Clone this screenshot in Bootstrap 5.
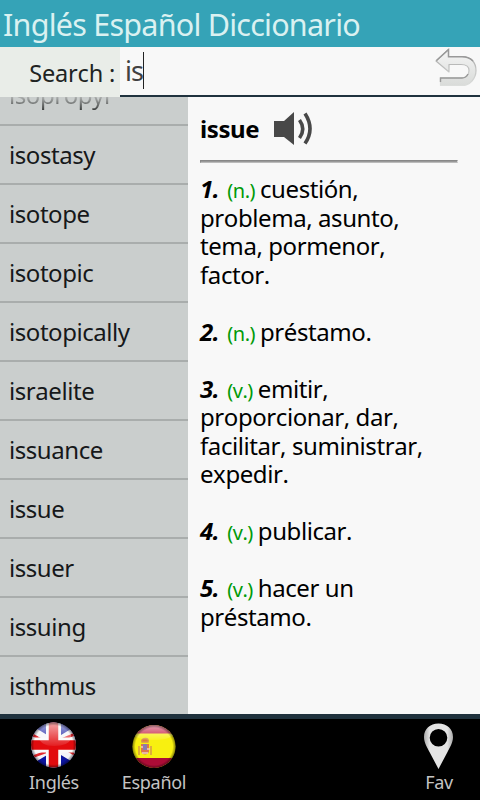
<!DOCTYPE html>
<html lang="es">
<head>
<meta charset="utf-8">
<meta name="viewport" content="width=device-width, initial-scale=1">
<title>Inglés Español Diccionario</title>
<link href="https://cdn.jsdelivr.net/npm/bootstrap@5.3.0/dist/css/bootstrap.min.css" rel="stylesheet">
<style>
body{font-family:"Noto Sans","Open Sans",sans-serif;background:#f8f8f8;color:#000;font-kerning:none}
.app{width:480px;height:800px}
.titlebar{height:47px;background:#35a3b7;color:#daf1f1;font-size:30.5px;line-height:48px;letter-spacing:-.76px;padding:0 0 0 3px}
.search{height:50px}
.search-label{width:120px;background:#e9ede8;color:#202322;font-size:23.5px;line-height:52px;letter-spacing:-.2px;padding-right:5px}
.search-field{border-bottom:2px solid #20323e;padding-left:5px;color:#414141}
.query{font-size:27px;line-height:37px;height:37px;margin-top:5px;border-right:1px solid #222;letter-spacing:-.9px}
.back{width:44px;height:42px;margin:0 1px 0 auto}
.main{height:617px}
.words{width:188px;background:#cacecd}
.words .list-group-item{height:59px;flex:none;background:#cacecd;border:0;border-bottom:2px solid #a9adac;padding:0 0 0 9px;font-size:24px;line-height:58px;color:#16181a;white-space:nowrap;letter-spacing:-.44px}
.words .list-group-item:last-child{border-bottom:0}
.words .clipped{height:29px;display:flex;align-items:flex-end;line-height:58px;overflow:hidden;color:transparent;background:#cacecd}
.clipped span{background:linear-gradient(#b4b7b6 52%,#3c3f3e 76%);-webkit-background-clip:text;background-clip:text}
.entry{padding:0 0 0 12px}
.headword{height:63px}
.headword b{font-size:24px;letter-spacing:-.4px;line-height:65px}
.headword svg{margin-left:15px}
.rule{width:258px;height:3px;border:1px solid #888;border-right-color:#ddd;border-bottom-color:#bbb;background:#999}
.senses{padding-top:12px}
.sense{font-size:24px;line-height:28.5px;white-space:nowrap;margin-bottom:28.5px;letter-spacing:-.42px}
.sense b{font-style:italic;margin-right:8px}
.sense i{font-style:normal;font-size:20px;color:#009a08;margin-right:5px;line-height:1;letter-spacing:-.5px}
.strip{height:5px;background:#20323e}
.tabs{height:81px;background:#000;color:#c4c4c4;font-size:18px}
.tab{line-height:24px;letter-spacing:-.3px;width:100px}
.tab-fav{width:82px}
.tab svg{display:block}
</style>
<script src="https://cdn.jsdelivr.net/npm/bootstrap@5.3.0/dist/js/bootstrap.bundle.min.js"></script>
</head>
<body>
<div class="app d-flex flex-column overflow-hidden">
  <header class="titlebar text-nowrap">Inglés Español Diccionario</header>
  <div class="search d-flex">
    <div class="search-label text-end">Search :</div>
    <div class="search-field d-flex flex-grow-1 align-items-start">
      <span class="query">is</span>
      <svg class="back" viewBox="0 0 44 42"><defs><linearGradient id="bk" x2="0" y2="1"><stop offset="0" stop-color="#f5f5f5"/><stop offset="1" stop-color="#d9dbd9"/></linearGradient><linearGradient id="bs" x2="0" y2="1"><stop offset="0" stop-color="#a0a0a0"/><stop offset=".6" stop-color="#c4c5c4"/><stop offset="1" stop-color="#dcdedc"/></linearGradient></defs>
        <path d="M1 14 13.500 2.500V9.500H27C36 9.500 41 15.500 41 23.500S35 38.500 27 38.500H5.500V31H26C31 31 34 28 34 23.500S31 17.500 26 17.500H14V25Z" fill="url(#bk)" stroke="url(#bs)" stroke-width="1.200" stroke-linejoin="round"/>
        <path d="M1.500 13.500 13.500 2.500V9.700H27Q34 9.700 38 14M5.500 35V31H27Q31 31 33 27" fill="none" stroke="#999" stroke-width="1.400"/></svg>
    </div>
  </div>
  <main class="main d-flex">
    <div class="words list-group list-group-flush rounded-0 overflow-hidden">
      <div class="list-group-item clipped"><span>isopropyl</span></div>
      <div class="list-group-item">isostasy</div>
      <div class="list-group-item">isotope</div>
      <div class="list-group-item">isotopic</div>
      <div class="list-group-item">isotopically</div>
      <div class="list-group-item">israelite</div>
      <div class="list-group-item">issuance</div>
      <div class="list-group-item">issue</div>
      <div class="list-group-item">issuer</div>
      <div class="list-group-item">issuing</div>
      <div class="list-group-item">isthmus</div>
    </div>
    <article class="entry flex-grow-1">
      <div class="headword d-flex align-items-center"><b>issue</b>
        <svg width="40" height="34" viewBox="0 0 40 34"><path d="M0 9H10L20 0V33L10 25H0Z" fill="#484848"/><path d="M25.500 8Q32 17 25.500 26M31 1.500Q41 17 31 31.500" fill="none" stroke="#484848" stroke-width="3.600"/></svg>
      </div>
      <div class="rule"></div>
      <div class="senses">
        <div class="sense"><b>1.</b><i>(n.)</i>cuestión,<br>problema, asunto,<br>tema, pormenor,<br>factor.</div>
        <div class="sense"><b>2.</b><i>(n.)</i>préstamo.</div>
        <div class="sense"><b>3.</b><i>(v.)</i>emitir,<br>proporcionar, dar,<br>facilitar, suministrar,<br>expedir.</div>
        <div class="sense"><b>4.</b><i>(v.)</i>publicar.</div>
        <div class="sense"><b>5.</b><i>(v.)</i>hacer un<br>préstamo.</div>
      </div>
    </article>
  </main>
  <div class="strip"></div>
  <nav class="tabs d-flex">
    <div class="tab d-flex flex-column align-items-center ms-1">
      <svg width="50" height="51" viewBox="0 0 48 51"><defs><clipPath id="uk"><circle cx="23.500" cy="26" r="22.500"/></clipPath><linearGradient id="gl" x2="0" y2="1"><stop offset="0" stop-color="#fff" stop-opacity=".65"/><stop offset="1" stop-color="#fff" stop-opacity=".08"/></linearGradient><radialGradient id="sh"><stop offset=".86" stop-color="#000" stop-opacity="0"/><stop offset="1" stop-color="#000" stop-opacity=".45"/></radialGradient></defs>
        <g clip-path="url(#uk)"><path d="M0 2H48V50H0Z" fill="#0c149f"/><path d="M-6 8 54 44M-6 44 54 8" stroke="#f4f4f8" stroke-width="10"/><path d="M-6 11 24 28M24 23 54 41M-6 41 24 30M24 24 54 11" stroke="#e3282d" stroke-width="2.600"/><path d="M23.500 2V50M0 26H48" stroke="#fafafa" stroke-width="15"/><path d="M23.500 2V50M0 26H48" stroke="#e20b0e" stroke-width="9.500"/><path d="M7 3H41V20Q38 27 24 27T8 17Z" fill="url(#gl)"/></g><circle cx="23.500" cy="26" r="22.500" fill="url(#sh)"/></svg>
      Inglés</div>
    <div class="tab d-flex flex-column align-items-center">
      <svg width="48" height="51" viewBox="0 0 48 51"><defs><clipPath id="es"><circle cx="24" cy="27.500" r="21.500"/></clipPath></defs>
        <g clip-path="url(#es)"><path d="M0 5H48V50H0Z" fill="#f8f010"/><path d="M0 5H48V14.500H0Z" fill="#c11039"/><path d="M0 39H48V50H0Z" fill="#ac0c36"/><path d="M11 25H19V33Q15 38 11 33Z" fill="#dc7550"/><path d="M12 23Q11 20 15 19.500T18 23ZM9 27V36M21 27V36" fill="#dd7b3c" stroke="#d7974a" stroke-width="1.500"/><path d="M13 25H17V31H13Z" fill="#8b7cae"/><path d="M11 28H13M17 30H20M12 34H18" stroke="#edcbc0" stroke-width="1.500"/><path d="M3 5H45V14Q41 21 24 21T3 15Z" fill="url(#gl)"/></g><circle cx="24" cy="27.500" r="21.500" fill="url(#sh)"/></svg>
      Español</div>
    <div class="tab tab-fav d-flex flex-column align-items-center ms-auto">
      <svg width="40" height="51" viewBox="0 0 40 51"><defs><linearGradient id="pn"><stop offset="0" stop-color="#aaa"/><stop offset=".2" stop-color="#e4e4e4"/><stop offset=".8" stop-color="#e4e4e4"/><stop offset="1" stop-color="#aaa"/></linearGradient></defs><path fill-rule="evenodd" d="M19.500 4.500C11 4.500 5 10 5 18C5 24 8.500 29 10.500 33L19.500 50 28.500 33C30.500 29 34 24 34 18C34 10 28 4.500 19.500 4.500ZM19.500 10A8.800 8.800 0 1 1 19.500 27.600A8.800 8.800 0 1 1 19.500 10Z" fill="url(#pn)"/></svg>
      Fav</div>
  </nav>
</div>
</body>
</html>
